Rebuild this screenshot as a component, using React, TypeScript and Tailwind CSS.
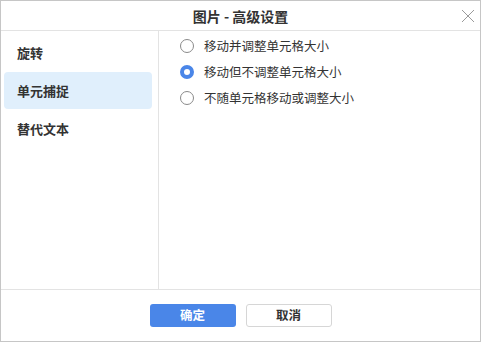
const TABS = ["旋转", "单元捕捉", "替代文本"];

const OPTIONS = ["移动并调整单元格大小", "移动但不调整单元格大小", "不随单元格移动或调整大小"];

function Radio({ checked }: { checked: boolean }) {
  return checked ? (
    <span className="h-[14px] w-[14px] shrink-0 rounded-full border-[4px] border-[#4a86e8] bg-white" />
  ) : (
    <span className="h-[14px] w-[14px] shrink-0 rounded-full border border-[#8a8a8a] bg-white" />
  );
}

export default function App() {
  const active = 1;
  const selected = 1;

  return (
    <div
      className="flex h-[342px] w-[481px] flex-col border border-[#c6c6c6] bg-white text-[#333]"
      style={{ fontFamily: '"Noto Sans CJK SC", "Noto Sans", sans-serif' }}
    >
      <div className="relative flex h-[30px] shrink-0 items-center justify-center border-b border-[#e3e3e3]">
        <span className="text-[14px] font-bold leading-none text-[#333]">图片 - 高级设置</span>
        <svg className="absolute right-[5px] top-[8px]" width="14" height="14" viewBox="0 0 14 14">
          <path d="M1 1 L13 13 M13 1 L1 13" stroke="#9a9a9a" strokeWidth="1" fill="none" />
        </svg>
      </div>

      <div className="flex flex-1">
        <div className="flex w-[158px] shrink-0 flex-col border-r border-[#e3e3e3] pt-[2px]">
          {TABS.map((tab, i) => (
            <div key={tab} className="flex h-[38px] items-center pl-[3px] pr-[6px]">
              <div
                className={
                  i === active
                    ? "flex h-[37px] w-full items-center rounded-[4px] bg-[#e0effc] pl-[13px]"
                    : "flex h-[37px] w-full items-center pl-[13px]"
                }
              >
                <span className="text-[13px] font-semibold leading-none">{tab}</span>
              </div>
            </div>
          ))}
        </div>

        <div className="flex flex-1 flex-col pl-[21px] pt-[2px]">
          {OPTIONS.map((opt, i) => (
            <div key={opt} className="flex h-[26px] items-center gap-[10px]">
              <Radio checked={i === selected} />
              <span className="text-[12.5px] leading-none text-[#333]">{opt}</span>
            </div>
          ))}
        </div>
      </div>

      <div className="flex h-[52px] shrink-0 items-start justify-center gap-[10px] border-t border-[#e3e3e3] pt-[14px]">
        <button className="flex h-[23px] w-[86px] items-center justify-center rounded-[3px] bg-[#4a86e8] text-[12.5px] font-bold text-white">
          确定
        </button>
        <button className="flex h-[23px] w-[86px] items-center justify-center rounded-[3px] border border-[#d6d6d6] bg-white text-[12.5px] font-bold text-[#333]">
          取消
        </button>
      </div>
    </div>
  );
}
